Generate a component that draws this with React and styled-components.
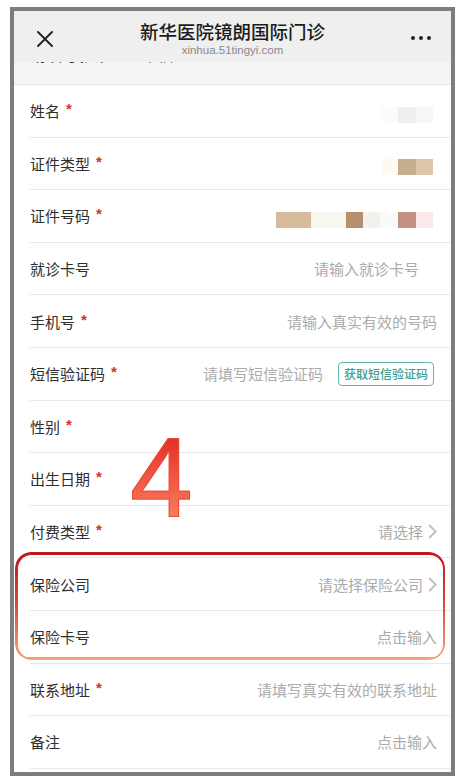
import React from "react";
import styled, { createGlobalStyle } from "styled-components";

const GlobalStyle = createGlobalStyle`
  html, body {
    margin: 0;
    padding: 0;
    background: #ffffff;
  }
  body {
    font-family: "Noto Sans CJK SC", "Noto Sans", "Liberation Sans", sans-serif;
    color: #333333;
  }
`;

const Page = styled.div`
  padding: 7px 6px 4px 10px;
`;

const Frame = styled.div`
  position: relative;
  width: 445px;
  box-sizing: border-box;
  border: 4px solid #7d7d7d;
  background: #ffffff;
  overflow: hidden;
`;

const NavBar = styled.div`
  height: 51px;
  background: #efefef;
  display: grid;
  grid-template-columns: 60px 1fr 60px;
  align-items: center;
`;

const CloseButton = styled.div`
  padding-left: 23px;
  padding-top: 4px;
  display: flex;
`;

const TitleBlock = styled.div`
  align-self: start;
  padding-top: 10px;
  display: flex;
  flex-direction: column;
  align-items: center;
`;

const Title = styled.div`
  font-size: 18.5px;
  line-height: 20px;
  font-weight: 500;
  color: #1c1c1c;
  white-space: nowrap;
`;

const SubTitle = styled.div`
  font-family: "Liberation Sans", "Noto Sans", sans-serif;
  font-size: 11.5px;
  line-height: 14px;
  color: #8a8a8a;
  margin-top: 2px;
`;

const MoreButton = styled.div`
  justify-self: end;
  padding-right: 20px;
  padding-top: 3px;
  display: flex;
  gap: 4px;
`;

const Dot = styled.span`
  width: 4px;
  height: 4px;
  border-radius: 50%;
  background: #222222;
`;

const SectionTitle = styled.div`
  height: 23px;
  box-sizing: border-box;
  background: #f5f5f5;
  border-bottom: 1px solid #e4e4e4;
  overflow: hidden;
`;

const SectionText = styled.div`
  margin-top: -18px;
  padding-left: 16px;
  font-size: 16px;
  line-height: 20px;
  color: #333333;
`;

const FormList = styled.div`
  padding-bottom: 3px;
`;

const Row = styled.div`
  margin-left: 16px;
  padding-right: 14px;
  height: 52.6px;
  box-sizing: border-box;
  border-bottom: 1px solid #e8e8e8;
  display: flex;
  align-items: center;
`;

const Label = styled.div`
  font-size: 15px;
  color: #2e2e2e;
  white-space: nowrap;
  display: flex;
  align-items: flex-start;
`;

const Star = styled.span`
  font-family: "Liberation Sans", sans-serif;
  font-weight: 700;
  font-size: 15px;
  line-height: 15px;
  color: #d2322d;
  margin-left: 6px;
  margin-top: 1px;
`;

const Value = styled.div`
  margin-left: auto;
  margin-right: ${(p) => p.$trail || 0}px;
  font-size: 15px;
  color: #ababab;
  white-space: nowrap;
  display: flex;
  align-items: center;
`;

const Chevron = styled.svg`
  margin-left: 5px;
  flex: none;
`;

const CodeButton = styled.button`
  margin-left: 15px;
  margin-right: 3px;
  height: 24px;
  padding: 0 5px;
  border: 1.5px solid #62b4ad;
  border-radius: 4px;
  background: #ffffff;
  color: #3f9d95;
  font-family: "Noto Sans CJK SC", sans-serif;
  font-size: 12px;
  font-weight: 500;
  white-space: nowrap;
`;

const Mosaic = styled.div`
  margin-left: auto;
  margin-right: 4px;
  margin-top: 8px;
  display: flex;
`;

const Cell = styled.span`
  width: ${(p) => p.$w || 17.5}px;
  height: 16px;
  background: ${(p) => p.$c};
`;

const Highlight = styled.div`
  position: relative;

  &::before {
    content: "";
    position: absolute;
    top: -6px;
    left: 1px;
    right: 6px;
    bottom: 4px;
    border-radius: 16px;
    padding: 2.5px;
    background: linear-gradient(180deg, #bd161c 0%, #d6453a 45%, #f3a577 100%);
    -webkit-mask: linear-gradient(#000 0 0) content-box, linear-gradient(#000 0 0);
    -webkit-mask-composite: xor;
    mask-composite: exclude;
    pointer-events: none;
  }
`;

const StepNumber = styled.span`
  position: absolute;
  top: 411px;
  left: 116px;
  font-family: "Liberation Sans", Arial, sans-serif;
  font-size: 113px;
  line-height: 1;
  background: linear-gradient(180deg, #e4312a 15%, #fb7d5e 85%);
  -webkit-background-clip: text;
  background-clip: text;
  color: transparent;
  -webkit-text-stroke: 1px #ea4a35;
  pointer-events: none;
`;

const CloseIcon = () => (
  <svg width="16" height="16" viewBox="0 0 16 16">
    <path d="M1 1 L15 15 M15 1 L1 15" stroke="#1f1f1f" strokeWidth="1.8" strokeLinecap="round" />
  </svg>
);

const Arrow = () => (
  <Chevron width="9" height="15" viewBox="0 0 9 15">
    <path d="M1.2 1 L7.8 7.5 L1.2 14" fill="none" stroke="#bdbdbd" strokeWidth="1.8" />
  </Chevron>
);

const FieldRow = ({ label, required, children }) => (
  <Row>
    <Label>
      {label}
      {required && <Star>*</Star>}
    </Label>
    {children}
  </Row>
);

const nameCells = ["#fbfbfb", "#efefef", "#f6f6f6"];
const typeCells = ["#fdfaf1", "#c5ae8d", "#dfc8a9"];
const idCells = [
  ["#d6bc9d", 35],
  ["#f4f8ee", 35],
  ["#b98e6e", 17],
  ["#f2f2ea", 17],
  ["#fafafa", 18],
  ["#c29083", 18],
  ["#fbe8ea", 17],
];

export default function App() {
  return (
    <Page>
      <GlobalStyle />
      <Frame>
        <NavBar>
          <CloseButton>
            <CloseIcon />
          </CloseButton>
          <TitleBlock>
            <Title>新华医院镜朗国际门诊</Title>
            <SubTitle>xinhua.51tingyi.com</SubTitle>
          </TitleBlock>
          <MoreButton>
            <Dot />
            <Dot />
            <Dot />
          </MoreButton>
        </NavBar>

        <SectionTitle>
          <SectionText>请填写就诊人基本信息</SectionText>
        </SectionTitle>

        <FormList>
          <FieldRow label="姓名" required>
            <Mosaic>
              {nameCells.map((c, i) => (
                <Cell key={i} $c={c} />
              ))}
            </Mosaic>
          </FieldRow>
          <FieldRow label="证件类型" required>
            <Mosaic>
              {typeCells.map((c, i) => (
                <Cell key={i} $c={c} />
              ))}
            </Mosaic>
          </FieldRow>
          <FieldRow label="证件号码" required>
            <Mosaic>
              {idCells.map(([c, w], i) => (
                <Cell key={i} $c={c} $w={w} />
              ))}
            </Mosaic>
          </FieldRow>
          <FieldRow label="就诊卡号">
            <Value $trail={18}>请输入就诊卡号</Value>
          </FieldRow>
          <FieldRow label="手机号" required>
            <Value>请输入真实有效的号码</Value>
          </FieldRow>
          <FieldRow label="短信验证码" required>
            <Value>请填写短信验证码</Value>
            <CodeButton>获取短信验证码</CodeButton>
          </FieldRow>
          <FieldRow label="性别" required />
          <FieldRow label="出生日期" required />
          <FieldRow label="付费类型" required>
            <Value>
              请选择
              <Arrow />
            </Value>
          </FieldRow>
          <Highlight>
            <FieldRow label="保险公司">
              <Value>
                请选择保险公司
                <Arrow />
              </Value>
            </FieldRow>
            <FieldRow label="保险卡号">
              <Value>点击输入</Value>
            </FieldRow>
          </Highlight>
          <FieldRow label="联系地址" required>
            <Value>请填写真实有效的联系地址</Value>
          </FieldRow>
          <FieldRow label="备注">
            <Value>点击输入</Value>
          </FieldRow>
        </FormList>

        <StepNumber>4</StepNumber>
      </Frame>
    </Page>
  );
}
